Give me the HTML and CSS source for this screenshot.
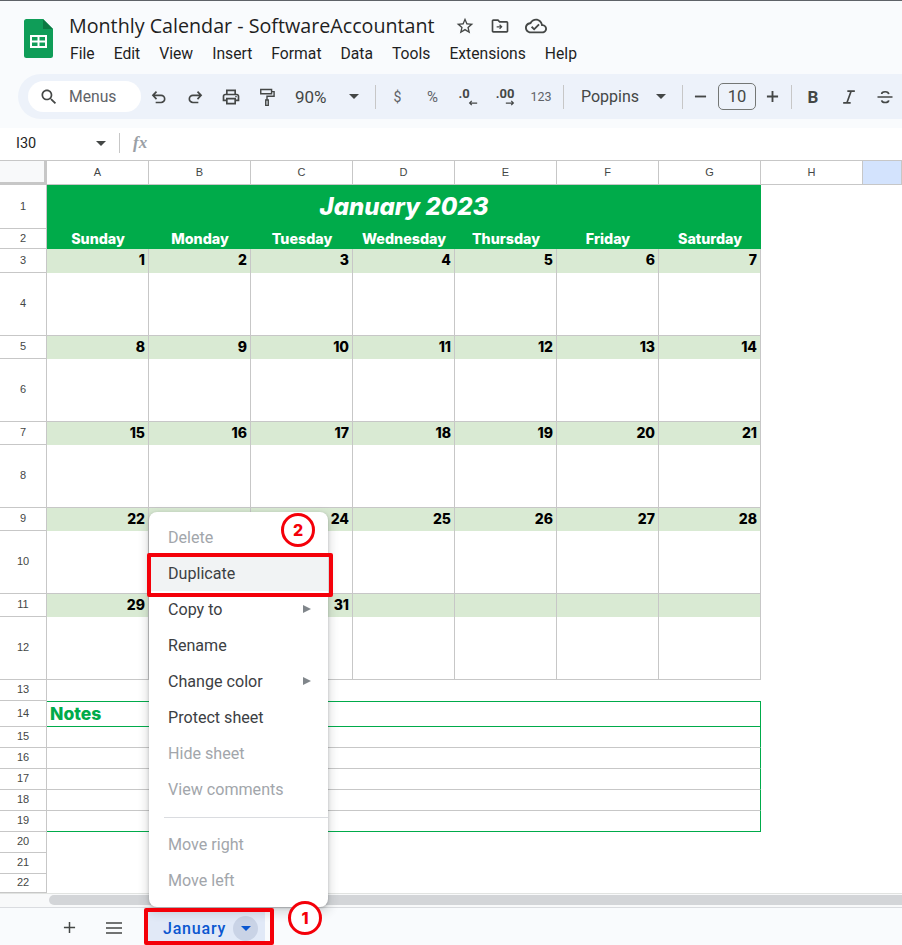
FILE: index.html
```html
<!DOCTYPE html>
<html lang="en">
<head>
<meta charset="utf-8">
<title>Monthly Calendar - SoftwareAccountant</title>
<link rel="stylesheet" href="styles.css">
</head>
<body>
<div class="app">
  <header class="head">
    <svg class="logo" viewBox="0 0 29 39"><path fill="#0f9d58" d="M2.5 0H19l10 10v26.500a2.500 2.500 0 0 1-2.500 2.500h-24A2.500 2.500 0 0 1 0 36.500v-34A2.500 2.500 0 0 1 2.500 0z"/><path fill="#0b7a43" d="M19 0l10 10H19z"/><path fill="#fff" d="M6 16h17v13H6zM8 18v3.500h5.500V18zm7.500 0v3.500H21V18zM8 23.500V27h5.500v-3.500zm7.500 0V27H21v-3.500z" fill-rule="evenodd"/></svg>
    <div class="head-main">
      <div class="title-row">
        <span class="doc-title">Monthly Calendar - SoftwareAccountant</span>
        <svg class="ti star" viewBox="0 0 24 24"><path d="M22 9.240l-7.190-.62L12 2 9.190 8.630 2 9.240l5.460 4.730L5.820 21 12 17.270 18.180 21l-1.630-7.030L22 9.240zM12 15.400l-3.760 2.270 1-4.280-3.320-2.880 4.380-.38L12 6.100l1.710 4.040 4.380.38-3.320 2.880 1 4.280L12 15.400z"/></svg>
        <svg class="ti move" viewBox="0 0 24 24"><path d="M20 6h-8l-2-2H4c-1.100 0-2 .9-2 2v12c0 1.100.9 2 2 2h16c1.100 0 2-.9 2-2V8c0-1.100-.9-2-2-2zm0 12H4V6h5.170l2 2H20v10z"/><path d="M12 10l-1 1 1.300 1.300H8v1.400h4.300L11 15l1 1 3-3z"/></svg>
        <svg class="ti cloud" viewBox="0 0 24 24"><path d="M19.350 10.040C18.670 6.590 15.640 4 12 4 9.110 4 6.600 5.640 5.350 8.040 2.340 8.360 0 10.910 0 14c0 3.310 2.690 6 6 6h13c2.760 0 5-2.240 5-5 0-2.640-2.050-4.780-4.650-4.960zM19 18H6c-2.210 0-4-1.790-4-4 0-2.050 1.530-3.760 3.560-3.970l1.070-.11.500-.95C8.080 7.140 9.940 6 12 6c2.620 0 4.880 1.860 5.390 4.430l.3 1.500 1.530.11c1.560.1 2.780 1.410 2.780 2.960 0 1.650-1.350 3-3 3zm-9-3.820l-2.090-2.090L6.500 13.500 10 17l6.010-6.010-1.410-1.410z"/></svg>
      </div>
      <nav class="menubar">
        <span>File</span><span>Edit</span><span>View</span><span>Insert</span><span>Format</span><span>Data</span><span>Tools</span><span>Extensions</span><span>Help</span>
      </nav>
    </div>
  </header>

  <div class="toolbar">
    <div class="search">
      <svg class="tbi" viewBox="0 0 24 24"><path d="M15.500 14h-.79l-.28-.27C15.410 12.590 16 11.110 16 9.500 16 5.910 13.090 3 9.500 3S3 5.910 3 9.500 5.910 16 9.500 16c1.610 0 3.090-.59 4.230-1.570l.27.28v.79l5 4.990L20.490 19l-4.990-5zm-6 0C7.010 14 5 11.990 5 9.500S7.010 5 9.500 5 14 7.010 14 9.500 11.990 14 9.500 14z"/></svg>
      <span>Menus</span>
    </div>
    <div class="tool"><svg class="tbi line" viewBox="0 0 24 24"><path d="M5 10h9.500a4.300 4.300 0 0 1 0 8.600H8M9 5.500 4.700 10 9 14.500"/></svg></div>
    <div class="tool"><svg class="tbi line" viewBox="0 0 24 24"><path d="M19 10H9.500a4.300 4.300 0 0 0 0 8.600H16M15 5.500l4.300 4.500-4.300 4.500"/></svg></div>
    <div class="tool"><svg class="tbi" viewBox="0 0 24 24"><path d="M19 8h-1V3H6v5H5c-1.660 0-3 1.340-3 3v6h4v4h12v-4h4v-6c0-1.660-1.340-3-3-3zM8 5h8v3H8V5zm8 12v2H8v-4h8v2zm2-2v-2H6v2H4v-4c0-.55.45-1 1-1h14c.55 0 1 .45 1 1v4h-2z"/><circle cx="18" cy="11.500" r="1"/></svg></div>
    <div class="tool"><svg class="tbi line thin" viewBox="0 0 24 24"><path d="M4.500 3h13v5h-13zM17.500 5.500h3v5.500H12v4.500M10.500 15.500h3V22h-3z"/></svg></div>
    <div class="zoom-val">90%</div>
    <svg class="caret" viewBox="0 0 10 5"><path d="M0 0h10L5 5z"/></svg>
    <i class="sep sep-a"></i>
    <div class="tool txt">$</div>
    <div class="tool txt pct">%</div>
    <div class="tool dec dec-1"><b>.0</b><svg viewBox="0 0 12 6"><path d="M11 3H2M4.500.5 2 3l2.500 2.500"/></svg></div>
    <div class="tool dec dec-2"><b>.00</b><svg viewBox="0 0 12 6"><path d="M1 3h9M7.500.5 10 3 7.500 5.500"/></svg></div>
    <div class="tool num">123</div>
    <i class="sep sep-n"></i>
    <div class="font-val">Poppins</div>
    <svg class="caret caret-f" viewBox="0 0 10 5"><path d="M0 0h10L5 5z"/></svg>
    <i class="sep sep-b"></i>
    <svg class="pm minus" viewBox="0 0 14 14"><path d="M1 7h12"/></svg>
    <div class="size">10</div>
    <svg class="pm plus" viewBox="0 0 14 14"><path d="M1 7h12M7 1v12"/></svg>
    <i class="sep sep-c"></i>
    <div class="tool bold">B</div>
    <div class="tool"><svg class="tbi line" viewBox="0 0 24 24"><path d="M10 5h9M5 19h9M14.500 5l-5 14"/></svg></div>
    <div class="tool"><svg class="tbi line" viewBox="0 0 24 24"><path d="M3 12h18M8 8.500C8 5 16 4.500 16.500 8.500M8 16c.5 3.500 8 3.500 8.500 0"/></svg></div>
  </div>

  <div class="formula">
    <span class="ref">I30</span>
    <svg class="caret caret-ref" viewBox="0 0 10 5"><path d="M0 0h10L5 5z"/></svg>
    <i class="sep sep-fx"></i>
    <span class="fx">fx</span>
  </div>

  <main class="sheet">
    <div class="row hcol">
      <div class="corner"></div><div>A</div><div>B</div><div>C</div><div>D</div><div>E</div><div>F</div><div>G</div><div>H</div><div class="selcol"></div>
    </div>

    <div class="row h44 banner-row">
      <div class="rh">1</div><div class="banner">January 2023</div>
    </div>
    <div class="row h20 days">
      <div class="rh">2</div><div>Sunday</div><div>Monday</div><div>Tuesday</div><div>Wednesday</div><div>Thursday</div><div>Friday</div><div>Saturday</div>
    </div>

    <div class="row h24 date"><div class="rh">3</div><div>1</div><div>2</div><div>3</div><div>4</div><div>5</div><div>6</div><div>7</div></div>
    <div class="row h63 week"><div class="rh">4</div><div></div><div></div><div></div><div></div><div></div><div></div><div></div></div>
    <div class="row h23 date"><div class="rh">5</div><div>8</div><div>9</div><div>10</div><div>11</div><div>12</div><div>13</div><div>14</div></div>
    <div class="row h63 week"><div class="rh">6</div><div></div><div></div><div></div><div></div><div></div><div></div><div></div></div>
    <div class="row h23 date"><div class="rh">7</div><div>15</div><div>16</div><div>17</div><div>18</div><div>19</div><div>20</div><div>21</div></div>
    <div class="row h63 week"><div class="rh">8</div><div></div><div></div><div></div><div></div><div></div><div></div><div></div></div>
    <div class="row h23 date"><div class="rh">9</div><div>22</div><div>23</div><div>24</div><div>25</div><div>26</div><div>27</div><div>28</div></div>
    <div class="row h63 week"><div class="rh">10</div><div></div><div></div><div></div><div></div><div></div><div></div><div></div></div>
    <div class="row h23 date"><div class="rh">11</div><div>29</div><div>30</div><div>31</div><div></div><div></div><div></div><div></div></div>
    <div class="row h63 week"><div class="rh">12</div><div></div><div></div><div></div><div></div><div></div><div></div><div></div></div>

    <div class="row h21"><div class="rh">13</div></div>
    <div class="row h26 notes"><div class="rh">14</div><div class="notes-head">Notes</div></div>
    <div class="row h21 notes"><div class="rh">15</div><div class="note-line"></div></div>
    <div class="row h21 notes"><div class="rh">16</div><div class="note-line"></div></div>
    <div class="row h21 notes"><div class="rh">17</div><div class="note-line"></div></div>
    <div class="row h21 notes"><div class="rh">18</div><div class="note-line"></div></div>
    <div class="row h21 notes"><div class="rh">19</div><div class="note-line last"></div></div>
    <div class="row h21"><div class="rh">20</div></div>
    <div class="row h21"><div class="rh">21</div></div>
    <div class="row h19"><div class="rh">22</div></div>
  </main>

  <div class="hscroll"><div class="thumb"></div></div>

  <footer class="tabs">
    <svg class="tab-plus" viewBox="0 0 14 14"><path d="M1 7h12M7 1v12"/></svg>
    <svg class="tab-list" viewBox="0 0 16 12"><path d="M0 1h16M0 6h16M0 11h16"/></svg>
    <div class="tab">
      <span>January</span>
      <span class="tab-caret"><svg viewBox="0 0 10 5"><path d="M0 0h10L5 5z"/></svg></span>
    </div>
  </footer>

  <div class="menu">
    <div class="mi off">Delete</div>
    <div class="mi hover">Duplicate</div>
    <div class="mi">Copy to<svg viewBox="0 0 8 8"><path d="M0 0l8 4-8 4z"/></svg></div>
    <div class="mi">Rename</div>
    <div class="mi">Change color<svg viewBox="0 0 8 8"><path d="M0 0l8 4-8 4z"/></svg></div>
    <div class="mi">Protect sheet</div>
    <div class="mi off">Hide sheet</div>
    <div class="mi off">View comments</div>
    <hr class="mdiv">
    <div class="mi off">Move right</div>
    <div class="mi off">Move left</div>
  </div>

  <div class="mark mark-dup"></div>
  <div class="mark mark-tab"></div>
  <div class="badge badge-1">1</div>
  <div class="badge badge-2">2</div>
</div>
</body>
</html>
```

FILE: styles.css
```css
* { box-sizing: border-box; }
html, body { margin: 0; padding: 0; background: #fff; }
body { width: 902px; height: 945px; overflow: hidden; font-family: Roboto, "Liberation Sans", sans-serif; color: #202124; }
.app { position: relative; width: 902px; height: 945px; overflow: hidden; }

/* header */
.head { display: flex; height: 74px; background: #f9fbfd; border-top: 1px solid #5f6368; padding: 18px 0 0 24px; }
.logo { width: 29px; height: 39px; flex: none; }
.head-main { margin: -8px 0 0 16px; }
.title-row { display: flex; align-items: center; height: 30px; }
.doc-title { font-family: "Open Sans", sans-serif; font-size: 19.700px; color: #1f1f1f; line-height: 30px; white-space: nowrap; }
.ti { width: 20px; height: 20px; fill: #444746; flex: none; }
.star { margin-left: 20px; }
.move { margin-left: 15px; }
.cloud { width: 22px; height: 22px; margin-left: 15px; }
.menubar { display: flex; gap: 19px; margin-top: 1px; font-size: 15.700px; line-height: 24px; color: #1f1f1f; padding-left: 1px; }

/* toolbar */
.toolbar { display: flex; align-items: center; width: 902px; height: 54px; background: #f9fbfd; padding: 0 0 9px 18px; position: relative; }
.toolbar::before { content: ""; position: absolute; left: 18px; right: -30px; top: 0; height: 45px; background: #edf2fa; border-radius: 23px; }
.toolbar > * { position: relative; flex: none; }
.search { display: flex; align-items: center; width: 113px; height: 31px; margin-left: 10px; background: #fff; border-radius: 16px; padding-left: 11px; font-size: 15.700px; color: #5f6368; }
.search span { margin-left: 10px; }
.tbi { width: 20px; height: 20px; fill: #444746; }
.tbi.line { fill: none; stroke: #444746; stroke-width: 2; }
.tbi.line.thin { stroke-width: 1.700; }
.tool { display: flex; align-items: center; justify-content: center; width: 36px; height: 30px; color: #444746; }
.txt { font-size: 14px; color: #5f6368; width: 35px; }
.pct { font-size: 15px; }
.num { font-size: 12.500px; color: #5f6368; width: 26px; }
.dec { flex-direction: column; }
.dec-1 { width: 32px; }
.dec-2 { width: 46px; }
.dec b { font-size: 13px; line-height: 12px; font-weight: 700; color: #444746; }
.dec-1 b { margin-right: 4px; }
.dec svg { width: 10px; height: 6px; fill: none; stroke: #444746; stroke-width: 1.500; }
.dec-1 svg { margin-left: 14px; }
.dec-2 svg { margin-left: 9px; }
.zoom-val { width: 60px; padding-left: 10px; font-size: 17px; color: #444746; }
.caret { width: 10px; height: 5px; fill: #444746; flex: none; }
.toolbar > .caret { margin-left: 4px; }
.sep { display: block; width: 1px; height: 24px; background: #c7c7c7; flex: none; }
.sep-a { margin: 0 4px 0 16px; }
.sep-n { margin-left: 9px; }
.font-val { width: 92px; padding-left: 17px; font-size: 16px; color: #444746; }
.toolbar > .caret-f { margin-left: 0; }
.sep-b { margin-left: 16px; }
.pm { width: 13px; height: 13px; fill: none; stroke: #444746; stroke-width: 2; flex: none; }
.minus { margin-left: 11px; }
.size { width: 38px; height: 27px; margin-left: 11px; border: 1px solid #747775; border-radius: 5px; text-align: center; line-height: 25px; font-size: 16.500px; color: #444746; }
.plus { margin-left: 10px; }
.sep-c { margin-left: 12px; margin-right: 3px; }
.bold { font: 700 17px Roboto, sans-serif; }

/* formula bar */
.formula { display: flex; align-items: center; height: 33px; background: #fff; padding: 0 0 2px 16px; border-bottom: 1px solid #c7c7c7; }
.ref { width: 80px; font-size: 14.500px; color: #1f1f1f; }
.caret-ref { margin-left: 0; }
.sep-fx { height: 20px; margin-left: 13px; }
.fx { margin-left: 13px; font: italic 700 17px "Liberation Serif", serif; color: #9aa0a6; }

/* grid */
.sheet { font-family: "Liberation Sans", Arial, sans-serif; }
.row { display: grid; grid-template-columns: 47px repeat(8, 102px) 39px; }
.h19 { height: 19px; } .h20 { height: 20px; } .h21 { height: 21px; } .h23 { height: 23px; } .h24 { height: 24px; }
.h26 { height: 26px; } .h44 { height: 44px; } .h63 { height: 63px; }
.hcol { height: 24px; font-size: 11px; color: #444746; text-align: center; line-height: 22px; }
.hcol > div { border-right: 1px solid #c7c7c7; border-bottom: 1px solid #c7c7c7; }
.hcol .corner { background: #f8f9fa; border-right: 3px solid #c7c7c7; border-bottom: 3px solid #c7c7c7; }
.hcol .selcol { background: #d3e3fd; }
.rh { grid-column: 1; display: flex; align-items: center; justify-content: center; padding-bottom: 2px; font-size: 11px; color: #444746; background: #fff; border-right: 1px solid #c7c7c7; border-bottom: 1px solid #c7c7c7; }

.banner { grid-column: 2 / span 7; background: #00ab4a; color: #fff; text-align: center; font: italic 800 24px/43px Inter, sans-serif; }
.days > div:not(.rh) { background: #00ab4a; color: #fff; text-align: center; font: 800 14.300px/20px Inter, sans-serif; }
.days .rh { border-bottom-color: #c7c7c7; }
.date > div:not(.rh) { background: #d9ead3; border-right: 1px solid #c7c7c7; text-align: right; padding-right: 3px; font: 800 14px/22px Inter, sans-serif; color: #000; }
.week > div:not(.rh) { border-right: 1px solid #c7c7c7; border-bottom: 1px solid #c7c7c7; }

.notes-head { grid-column: 2 / span 7; border: 1px solid #00ab4a; border-left: 0; padding-left: 3px; font: 800 17.500px/24px Inter, sans-serif; color: #00ab4a; }
.note-line { grid-column: 2 / span 7; border-right: 1px solid #00ab4a; border-bottom: 1px solid #c7c7c7; }
.note-line.last { border-bottom-color: #00ab4a; }

/* bottom */
.hscroll { height: 14px; background: #f8f9fa; border-top: 1px solid #e1e3e1; padding: 1px 0 0 49px; }
.thumb { height: 10px; background: #d3d5d8; border-radius: 5px 0 0 5px; }
.tabs { display: flex; align-items: center; height: 38px; background: #f9fbfd; border-top: 1px solid #dadce0; }
.tab-plus { width: 13px; height: 13px; margin: 2px 0 0 63px; fill: none; stroke: #444746; stroke-width: 1.600; }
.tab-list { width: 16px; height: 12px; margin: 2px 0 0 30px; fill: none; stroke: #444746; stroke-width: 1.500; }
.tab { display: flex; align-items: center; justify-content: space-between; width: 117px; height: 37px; margin-left: 26px; background: #e1e9f7; padding: 4px 7px 0 15px; font-size: 16px; font-weight: 500; letter-spacing: .8px; color: #0b57d0; }
.tab-caret { display: flex; align-items: center; justify-content: center; width: 25px; height: 25px; border-radius: 50%; background: #c9d3e6; }
.tab-caret svg { width: 10px; height: 5px; fill: #0b57d0; }

/* sheet tab menu */
.menu { position: absolute; left: 149px; top: 512px; width: 179px; height: 395px; padding: 7px 0; background: #fff; border-radius: 8px; box-shadow: 0 1px 3px rgba(60,64,67,.3), 0 4px 8px 3px rgba(60,64,67,.15); font-size: 16.100px; }
.mi { display: flex; align-items: center; justify-content: space-between; height: 36px; padding: 0 17px 0 19px; color: #3c4043; }
.mi svg { width: 8px; height: 8px; fill: #80868b; }
.mi.off { color: #a2a6ab; }
.mi.hover { background: #f1f3f4; }
.mdiv { margin: 10px 0 8px 15px; border: 0; border-top: 1px solid #dadce0; height: 1px; width: 164px; }

/* annotations */
.mark { position: absolute; border: 4px solid #f40009; border-radius: 2px; }
.mark-dup { left: 147px; top: 553px; width: 186px; height: 44px; }
.mark-tab { left: 144px; top: 908px; width: 130px; height: 37px; }
.badge { position: absolute; width: 34px; height: 34px; border: 3px solid #f40009; border-radius: 50%; background: #fff; color: #f40009; font: 800 16px/28px Inter, sans-serif; text-align: center; }
.badge-1 { left: 288px; top: 901px; }
.badge-2 { left: 281px; top: 513px; }
```
